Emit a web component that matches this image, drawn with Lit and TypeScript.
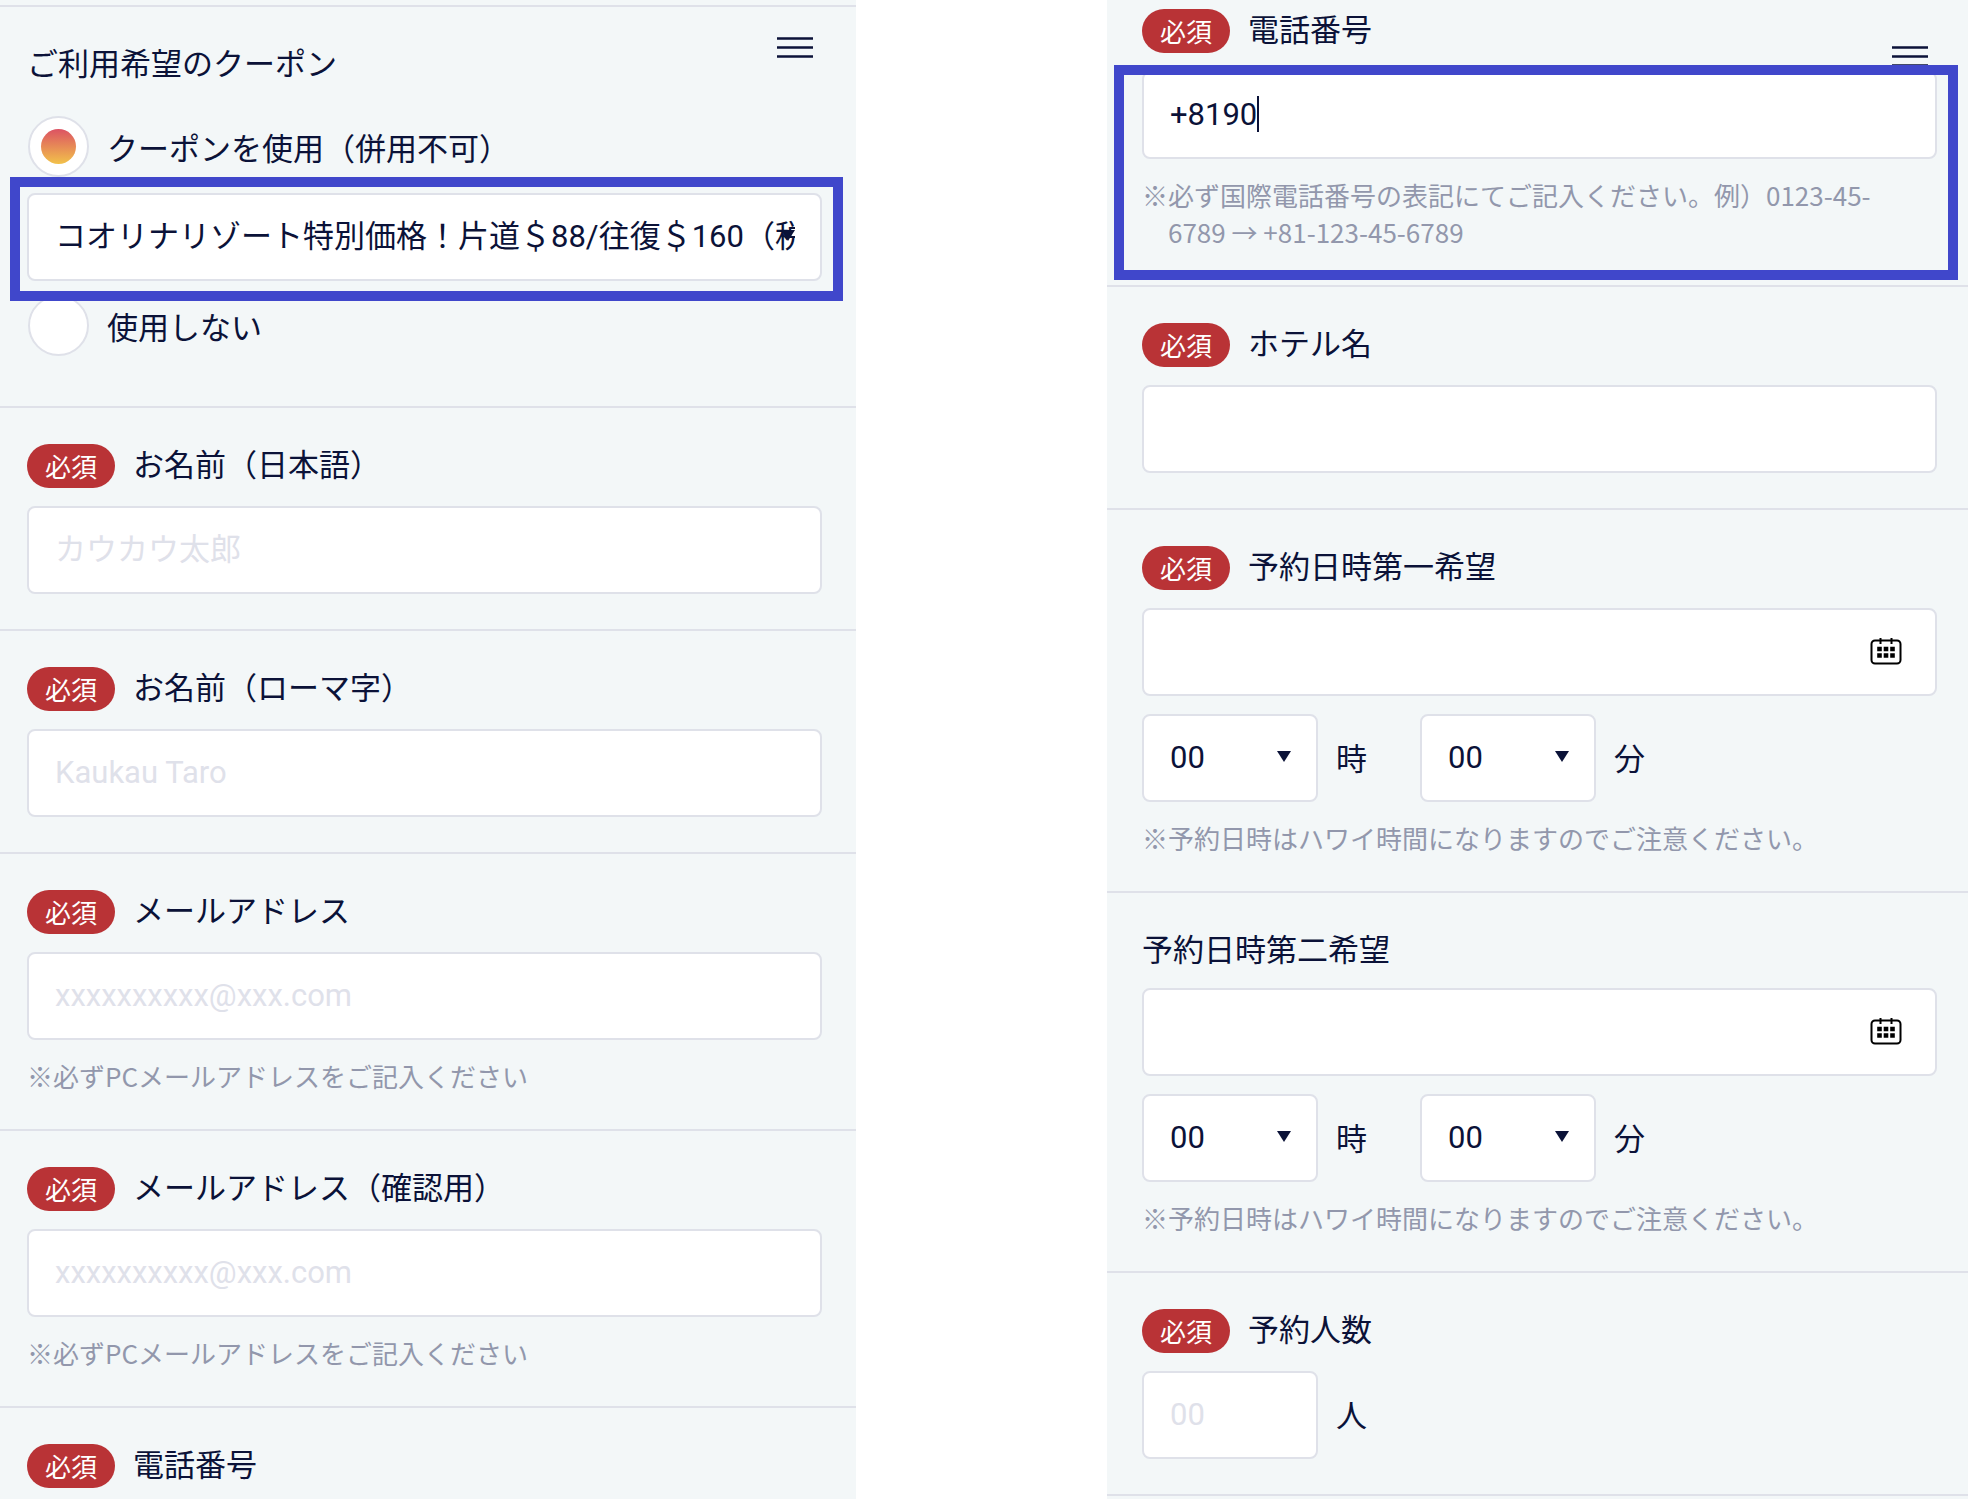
import { LitElement, html, css, nothing, type TemplateResult } from "lit";
import { customElement, state } from "lit/decorators.js";

const EMAIL_NOTE = "※必ずPCメールアドレスをご記入ください";
const TIME_NOTE = "※予約日時はハワイ時間になりますのでご注意ください。";
const PHONE_NOTE = "※必ず国際電話番号の表記にてご記入ください。例）0123-45-6789 → +81-123-45-6789";
const COUPONS = ["コオリナリゾート特別価格！片道＄88/往復＄160（税込）"];

const HOURS = Array.from({ length: 24 }, (_, i) => String(i).padStart(2, "0"));
const MINUTES = Array.from({ length: 12 }, (_, i) => String(i * 5).padStart(2, "0"));

@customElement("app-root")
export class AppRoot extends LitElement {
  @state() private useCoupon = true;

  static styles = css`
    :host {
      --ink: #0b1238;
      --line: #dfe1e9;
      --muted: #9297ac;
      --panel: #f3f7f8;
      --mark: #4047cb;
      display: block;
      min-height: 100vh;
      background: #fff;
      color: var(--ink);
      font-family: "Noto Sans CJK JP", sans-serif;
      font-size: 31px;
      line-height: 37px;
    }
    *, *::before {
      box-sizing: border-box;
    }
    .page {
      display: grid;
      grid-template-columns: 856fr 251fr 861fr;
      min-height: 100vh;
    }
    .panel {
      position: relative;
      background: var(--panel);
      min-width: 0;
    }
    .first {
      padding-top: 5px;
      --pad-left: 27px;
      --pad-right: 34px;
    }
    .second {
      grid-column: 3;
      --pad-left: 35px;
      --pad-right: 31px;
    }
    .menu {
      position: absolute;
      top: 37px;
      right: 43px;
      width: 36px;
      height: 22px;
      padding: 0;
      border: 0;
      background: none;
      color: inherit;
    }
    .second .menu {
      top: 46px;
      right: 40px;
    }
    svg {
      display: block;
    }
    .section {
      padding: 36px var(--pad-right) 35px var(--pad-left);
      border-top: 2px solid var(--line);
    }
    .section.coupon {
      padding-bottom: 50px;
    }
    .section.cut {
      padding-top: 9px;
      border-top: 0;
    }
    .section.tail {
      padding-bottom: 9px;
    }
    .section.end {
      padding: 0;
    }
    .heading {
      display: flex;
      align-items: flex-start;
      gap: 18px;
      min-height: 41px;
      margin: 0 0 18px;
      font-size: 31px;
      font-weight: 400;
    }
    .coupon .heading {
      margin-bottom: 32px;
    }
    .tail .heading {
      margin-bottom: 0;
    }
    .badge {
      height: 44px;
      padding: 0 18px;
      border-radius: 22px;
      background: #b93336;
      color: #fff;
      font-size: 26px;
      line-height: 44px;
    }
    .box {
      display: block;
      width: 100%;
      height: 88px;
      margin: 0;
      padding: 0 26px 2px;
      border: 2px solid var(--line);
      border-radius: 8px;
      outline: 0;
      background-color: #fff;
      color: var(--ink);
      font-family: Roboto, "Noto Sans CJK JP", sans-serif;
      font-size: 31px;
    }
    .box::placeholder {
      color: #dfe1ea;
      opacity: 1;
    }
    select.box {
      appearance: none;
      padding-right: 25px;
      text-overflow: clip;
    }
    .field {
      position: relative;
    }
    .arrow {
      position: absolute;
      top: 37px;
      right: 27px;
      pointer-events: none;
    }
    .calendar {
      position: absolute;
      top: 29px;
      right: 35px;
      width: 32px;
      height: 28px;
      padding: 0;
      border: 0;
      background: none;
      color: #000;
    }
    .caret {
      position: absolute;
      top: 25px;
      left: 115px;
      width: 2px;
      height: 36px;
      background: var(--ink);
    }
    .short {
      width: 176px;
    }
    .row {
      display: flex;
      align-items: center;
      gap: 18px;
    }
    .unit {
      padding-bottom: 4px;
    }
    .time {
      margin-top: 18px;
    }
    .time .unit + .short {
      margin-left: 35px;
    }
    .note {
      margin: 17px 0 0;
      padding: 0 16px 0 26px;
      color: var(--muted);
      font-size: 26px;
      line-height: 37px;
      text-indent: -26px;
    }
    .choice {
      display: flex;
      align-items: center;
      gap: 18px;
      padding-left: 1px;
    }
    .radio {
      appearance: none;
      flex: none;
      display: grid;
      place-items: center;
      width: 61px;
      height: 61px;
      margin: 0;
      border: 2px solid var(--line);
      border-radius: 50%;
      background: #fff;
    }
    .radio:checked::before {
      content: "";
      width: 35px;
      height: 35px;
      border-radius: 50%;
      background: linear-gradient(#dc5263, #f2c24a);
    }
    .marked {
      position: relative;
    }
    .coupon .marked {
      margin: 16px 0 14px;
    }
    .mark {
      position: absolute;
      z-index: 2;
      border: 10px solid var(--mark);
      pointer-events: none;
    }
    .coupon .mark {
      inset: -16px -21px -20px -17px;
    }
    .cut .mark {
      inset: -6px -21px -30px -28px;
    }
  `;

  private menu() {
    return html`<button class="menu" type="button" aria-label="メニュー">
      <svg width="36" height="22" viewBox="0 0 36 22" aria-hidden="true">
        <path d="M0 1.5H36M0 10.5H36M0 19.5H36" stroke="currentColor" stroke-width="2.6" />
      </svg>
    </button>`;
  }

  private heading(id: string, text: string, required = true) {
    return html`<div class="heading">
      ${required ? html`<span class="badge">必須</span>` : nothing}
      <label for=${id}>${text}</label>
    </div>`;
  }

  private textSection(id: string, title: string, type: string, placeholder = "", note = "") {
    return html`<div class="section">
      ${this.heading(id, title)}
      <input class="box" id=${id} type=${type} placeholder=${placeholder} />
      ${note ? html`<p class="note">${note}</p>` : nothing}
    </div>`;
  }

  private select(id: string, options: string[], short = true): TemplateResult {
    return html`<div class="field ${short ? "short" : ""}">
      <select class="box" id=${id} aria-label=${short ? nothing : "クーポン"}>
        ${options.map((o) => html`<option>${o}</option>`)}
      </select>
      <svg class="arrow" width="14" height="11" viewBox="0 0 14 11" aria-hidden="true">
        <path d="M0 0H14L7 11Z" fill="#0b1238" />
      </svg>
    </div>`;
  }

  private dateSection(id: string, title: string, required: boolean) {
    return html`<div class="section">
      ${this.heading(id, title, required)}
      <div class="field">
        <input class="box" id=${id} type="text" />
        <button class="calendar" type="button" aria-label="日付を選択">
          <svg width="32" height="28" viewBox="0 0 32 28" aria-hidden="true">
            <rect x="1.5" y="3.5" width="29" height="23" rx="3.5" fill="none" stroke="currentColor" stroke-width="2" />
            <path d="M10.5 1V7M21.5 1V7" stroke="currentColor" stroke-width="2" />
            <path
              d="M7.2 9.7h4.6v4.6H7.2zM13.7 9.7h4.6v4.6h-4.6zM20.2 9.7h4.6v4.6h-4.6zM7.2 16.2h4.6v4.6H7.2zM13.7 16.2h4.6v4.6h-4.6zM20.2 16.2h4.6v4.6h-4.6z"
              fill="currentColor"
            />
          </svg>
        </button>
      </div>
      <div class="row time">
        ${this.select(`${id}-hour`, HOURS)}
        <label class="unit" for="${id}-hour">時</label>
        ${this.select(`${id}-minute`, MINUTES)}
        <label class="unit" for="${id}-minute">分</label>
      </div>
      <p class="note">${TIME_NOTE}</p>
    </div>`;
  }

  private radio(id: string, text: string, value: boolean) {
    return html`<div class="choice">
      <input
        class="radio"
        type="radio"
        name="coupon"
        id=${id}
        .checked=${this.useCoupon === value}
        @change=${() => (this.useCoupon = value)}
      />
      <label for=${id}>${text}</label>
    </div>`;
  }

  render() {
    return html`<main class="page" lang="ja">
      <form class="panel first">
        ${this.menu()}
        <div class="section coupon" role="radiogroup" aria-labelledby="coupon-title">
          <h2 class="heading" id="coupon-title">ご利用希望のクーポン</h2>
          ${this.radio("coupon-use", "クーポンを使用（併用不可）", true)}
          <div class="marked">
            ${this.select("coupon-name", COUPONS, false)}
            <div class="mark"></div>
          </div>
          ${this.radio("coupon-none", "使用しない", false)}
        </div>
        ${this.textSection("name-ja", "お名前（日本語）", "text", "カウカウ太郎")}
        ${this.textSection("name-roman", "お名前（ローマ字）", "text", "Kaukau Taro")}
        ${this.textSection("email", "メールアドレス", "email", "xxxxxxxxxx@xxx.com", EMAIL_NOTE)}
        ${this.textSection("email-confirm", "メールアドレス（確認用）", "email", "xxxxxxxxxx@xxx.com", EMAIL_NOTE)}
        <div class="section tail">${this.heading("phone", "電話番号")}</div>
      </form>

      <form class="panel second">
        ${this.menu()}
        <div class="section cut">
          ${this.heading("phone", "電話番号")}
          <div class="marked">
            <div class="field">
              <input class="box" id="phone" type="tel" value="+8190" />
              <span class="caret"></span>
            </div>
            <p class="note">${PHONE_NOTE}</p>
            <div class="mark"></div>
          </div>
        </div>
        ${this.textSection("hotel", "ホテル名", "text")}
        ${this.dateSection("first-choice", "予約日時第一希望", true)}
        ${this.dateSection("second-choice", "予約日時第二希望", false)}
        <div class="section">
          ${this.heading("people", "予約人数")}
          <div class="row">
            <div class="short"><input class="box" id="people" type="text" inputmode="numeric" placeholder="00" /></div>
            <label class="unit" for="people">人</label>
          </div>
        </div>
        <div class="section end"></div>
      </form>
    </main>`;
  }
}
